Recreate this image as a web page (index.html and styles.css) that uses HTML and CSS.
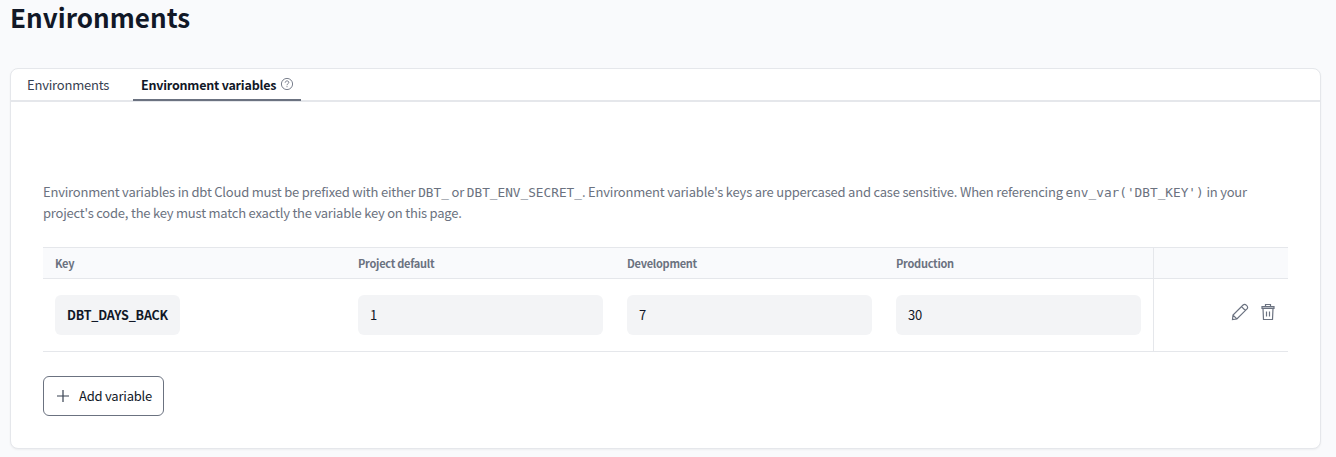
FILE: index.html
```html
<!DOCTYPE html>
<html lang="en">
<head>
<meta charset="utf-8">
<title>Environments</title>
<link rel="stylesheet" href="styles.css">
</head>
<body>
<h1 class="title">Environments</h1>
<main class="card">
  <nav class="tabs">
    <a class="tab">Environments</a>
    <a class="tab active">Environment variables
      <svg class="help" viewBox="0 0 14 14"><circle cx="7" cy="7" r="5.6"/><path d="M5.2 5.7C5.2 3.3 8.8 3.4 8.8 5.4C8.8 6.8 7 6.6 7 8.2M7 9.2V10.2"/></svg>
    </a>
  </nav>
  <section class="panel">
    <p class="intro">Environment variables in dbt Cloud must be prefixed with either <code>DBT_</code> or <code>DBT_ENV_SECRET_</code>. Environment variable's keys are uppercased and case sensitive. When referencing <code>env_var('DBT_KEY')</code> in your<br>project's code, the key must match exactly the variable key on this page.</p>
    <div class="table">
      <div class="row head">
        <div class="cell">Key</div><div class="cell">Project default</div><div class="cell">Development</div><div class="cell">Production</div><div class="cell actions"></div>
      </div>
      <div class="row body">
        <div class="cell"><span class="field key">DBT_DAYS_BACK</span></div>
        <div class="cell"><span class="field">1</span></div>
        <div class="cell"><span class="field">7</span></div>
        <div class="cell"><span class="field">30</span></div>
        <div class="cell actions">
          <svg class="icon" viewBox="0 0 18 18"><path d="M1.5 16.5L2 12.1L12.1 2C14.2 .1 17.9 3.8 16 5.9L5.9 16ZM2 12.1L5.9 16M10.5 3.6L14.4 7.5"/></svg>
          <svg class="icon trash" viewBox="0 0 18 18"><path class="lid" d="M3 3.5H15V5.5H3Z"/><path d="M4 5.5L4.5 16.5H13.5L14 5.5M6.5 3.5V1.5H11.5V3.5M7.5 8.5V13.5M10.5 8.5V13.5"/></svg>
        </div>
      </div>
    </div>
    <button class="add"><svg class="plus" viewBox="0 0 12 12"><path d="M6 0V12M0 6H12"/></svg><span>Add variable</span></button>
  </section>
</main>
</body>
</html>
```
FILE: styles.css
```css
* { box-sizing: border-box; }
body { margin: 0; padding: 0 15px 0 10px; height: 457px; overflow: hidden; background: #f9fafc; color: #111827; font: 13px/21px "Noto Sans CJK SC", sans-serif; letter-spacing: -.21px; }
.title { margin: 0; height: 68px; font-size: 26px; line-height: 34px; font-weight: 600; letter-spacing: 0.03px; }
.card { height: 381px; background: #fff; border: 1px solid #e5e7eb; border-radius: 8px; box-shadow: 0 1px 2px #0000000d; }
.tabs { display: flex; height: 33px; padding-left: 8px; gap: 16px; border-bottom: 2px solid #e5e7eb; }
.tab { height: 32px; width: 98px; padding: 0 8px; line-height: 32px; color: #374151; white-space: nowrap; }
.tab.active { display: flex; width: 168px; justify-content: space-between; color: #111827; font-size: 12.5px; font-weight: 600; letter-spacing: -.21px; border-bottom: 2px solid #6b7280; }
.help { flex: none; width: 14px; height: 14px; margin: 8px -1px 0 0; fill: none; stroke: #6b7280; stroke-width: .9; }
.panel { padding: 79px 32px 0; }
.intro { margin: 0 0 24px; height: 42px; white-space: nowrap; color: #6b7280; }
code { font: 12.75px/1 "DejaVu Sans Mono", monospace; letter-spacing: 0; }
.row { display: grid; grid-template-columns: 303px 269px 269px 269px 135px; border-bottom: 1px solid #e5e7eb; }
.cell { padding: 0 12px; }
.head { height: 32px; border-top: 1px solid #e5e7eb; background: #f9fafc; color: #6b7280; font-size: 11px; line-height: 30px; font-weight: 600; letter-spacing: -.27px; }
.body { height: 73px; }
.body .cell { padding-top: 16px; }
.field { display: block; height: 40px; padding: 0 12px; background: #f3f4f6; border-radius: 6px; line-height: 40px; }
.key { width: 125px; font-size: 12.5px; font-weight: 600; letter-spacing: -.2px; }
.actions { border-left: 1px solid #e5e7eb; display: flex; justify-content: flex-end; gap: 10px; }
.icon { width: 18px; height: 18px; margin-top: 8px; fill: none; stroke: #6b7280; stroke-width: 1.2; }
.trash { margin-right: -1px; }
.lid { fill: #b4b8c0; }
.add { display: flex; align-items: center; gap: 10px; width: 121px; height: 40px; margin-top: 24px; padding: 0 13px; background: #fff; border: 1px solid #6b7280; border-radius: 6px; color: #111827; font: inherit; letter-spacing: inherit; white-space: nowrap; }
.add span { padding-bottom: 2px; }
.plus { flex: none; width: 12px; height: 12px; stroke: #374151; stroke-width: 1.2; }
```
